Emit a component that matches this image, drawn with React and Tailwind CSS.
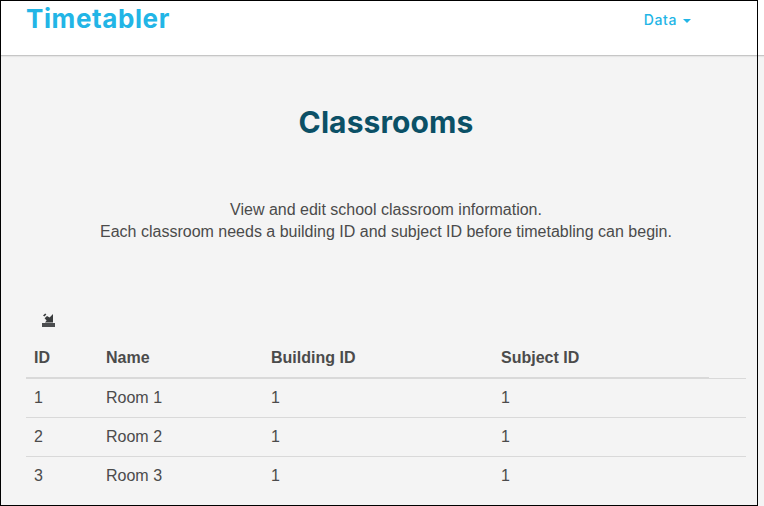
const rooms = [
  { id: 1, name: "Room 1", building: 1, subject: 1 },
  { id: 2, name: "Room 2", building: 1, subject: 1 },
  { id: 3, name: "Room 3", building: 1, subject: 1 },
];

function ImportIcon() {
  return (
    <svg width="14" height="14" viewBox="0 0 14 14" aria-hidden="true">
      <path d="M1 10h13v4H1z" fill="#4b4d4f" />
      <path d="M12 1V9.4H4L5.6 7.6 3.6 5.2 6 3 8.6 4.6z" fill="#3a3c3e" />
      <path d="M2 2.6 4.2 .6l1.2 1-2 1.9z" fill="#3a3c3e" />
    </svg>
  );
}

export default function App() {
  return (
    <div className="relative flex h-[506px] w-[764px] flex-col overflow-hidden bg-[#f4f4f4] font-['Liberation_Sans',Arial,sans-serif] text-[16px] text-[#4b4b4b]">
      <header className="flex h-14 shrink-0 items-start justify-between border-b border-[#c6c6c6] bg-white pr-[73px] pl-[26px] text-[#22b5e6] shadow-[0_1px_1px_#e6e6e6]">
        <a className="mt-[3px] text-[26px] leading-8 font-bold tracking-[0.6px] font-['Inter',sans-serif]">Timetabler</a>
        <nav className="mt-2.5 flex items-center gap-[6px] font-['Inter',sans-serif] text-[14px] leading-5 font-medium tracking-[0.6px]">
          Data
          <span className="mt-0.5 border-x-4 border-t-4 border-x-transparent border-t-[#22b5e6]" />
        </nav>
      </header>
      <main className="w-[772px]">
        <h1 className="mt-[46px] text-center font-['Inter',sans-serif] text-[30px] leading-10 font-bold tracking-[0.1px] text-[#0b5066]">
          Classrooms
        </h1>
        <p className="mt-[57px] text-center leading-[22px]">
          View and edit school classroom information.
          <br />
          Each classroom needs a building ID and subject ID before timetabling can begin.
        </p>
        <section className="mt-[70px] ml-[26px] w-[720px]">
          <div className="ml-[15px] h-[26px]">
            <ImportIcon />
          </div>
          <div className="-mb-px grid h-10 w-[683px] grid-cols-[72px_165px_230px_1fr] items-center border-b-2 border-[#d9d9d9] pl-2 font-bold">
            <span>ID</span>
            <span>Name</span>
            <span>Building ID</span>
            <span>Subject ID</span>
          </div>
          {rooms.map((room) => (
            <div
              key={room.id}
              className="grid h-[39px] grid-cols-[72px_165px_230px_1fr] items-center border-t border-[#d9d9d9] pl-2"
            >
              <span>{room.id}</span>
              <span>{room.name}</span>
              <span>{room.building}</span>
              <span>{room.subject}</span>
            </div>
          ))}
        </section>
      </main>
      <div className="pointer-events-none absolute top-0 left-0 h-[506px] w-[758px] border border-black" />
    </div>
  );
}
